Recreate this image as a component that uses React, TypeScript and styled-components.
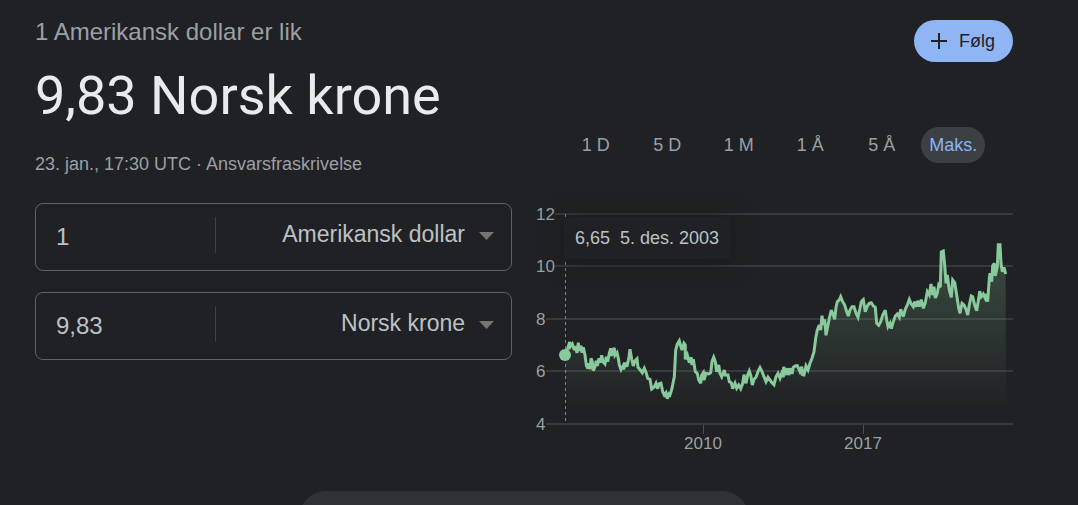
import React, { useState } from "react";
import styled, { createGlobalStyle } from "styled-components";

const GlobalStyle = createGlobalStyle`
  * { box-sizing: border-box; }
  body {
    margin: 0;
    background: #202124;
    color: #bdc1c6;
    font-family: "Liberation Sans", Arial, sans-serif;
    font-size: 18px;
  }
  button, input, select { font: inherit; color: inherit; }
`;

const Page = styled.main`
  height: 100vh;
  overflow: hidden;
  display: flex;
  flex-direction: column;
`;

const Columns = styled.div`
  width: 100%;
  display: grid;
  grid-template-columns: 1fr 1fr;
  gap: 24px;
  padding: 18px 65px 0 35px;
  flex-shrink: 0;
`;

const Converter = styled.section`
  min-width: 0;
`;

const BaseLine = styled.p`
  margin: 0 0 18px;
  font-size: 24px;
  line-height: 28px;
  color: #9aa0a6;
`;

const Result = styled.h1`
  margin: 0 0 26px;
  font-family: Roboto, sans-serif;
  font-weight: 400;
  font-size: 54px;
  line-height: 64px;
  white-space: nowrap;
  color: #e8eaed;
`;

const Stamp = styled.p`
  margin: 0 0 28px;
  line-height: 21px;
  color: #9aa0a6;
  a { color: inherit; text-decoration: none; }
`;

const Field = styled.div`
  position: relative;
  display: flex;
  align-items: center;
  height: 68px;
  border: 1px solid #5f6368;
  border-radius: 8px;
  & + & { margin-top: 21px; }
`;

const Amount = styled.input`
  width: 180px;
  height: 36px;
  margin-bottom: 4px;
  padding: 4px 0 0 20px;
  border: 0;
  border-right: 1px solid #3c4043;
  background: transparent;
  font-size: 24px;
  outline: none;
`;

const Currency = styled.select`
  flex: 1;
  min-width: 0;
  height: 64px;
  padding: 0 46px 6px 0;
  border: 0;
  background: transparent;
  appearance: none;
  font-size: 23px;
  text-align: right;
  text-align-last: right;
  outline: none;
`;

const Caret = styled.svg`
  position: absolute;
  right: 17px;
  top: 28px;
  pointer-events: none;
`;

const History = styled.section`
  display: flex;
  flex-direction: column;
  min-width: 0;
  padding-top: 2px;
`;

const Follow = styled.button`
  align-self: flex-end;
  display: flex;
  align-items: center;
  gap: 12px;
  height: 42px;
  padding: 0 18px 0 17px;
  border: 0;
  border-radius: 21px;
  background: #8fb5f5;
  color: #202124;
`;

const Ranges = styled.div`
  display: grid;
  grid-template-columns: repeat(6, 1fr);
  justify-items: center;
  margin: 65px 24px 0;
`;

const Range = styled.button<{ $active: boolean }>`
  height: 36px;
  padding: 0 8px;
  border: 0;
  border-radius: 18px;
  white-space: nowrap;
  background: ${(p) => (p.$active ? "#3c4043" : "transparent")};
  color: ${(p) => (p.$active ? "#8ab4f8" : "#9aa0a6")};
`;

const ChartBox = styled.div`
  position: relative;
  margin-top: 37px;
`;

const Chart = styled.svg`
  display: block;
  width: 100%;
  height: auto;
  overflow: visible;
  text { font-size: 17px; fill: #9aa0a6; }
`;

const Tip = styled.div`
  position: absolute;
  left: 28px;
  top: 17px;
  display: flex;
  gap: 10px;
  padding: 10px 12px 10px 11px;
  line-height: 22px;
  white-space: nowrap;
  border-radius: 2px;
  background: #202124;
  box-shadow: 0 2px 24px rgba(24, 24, 24, 0.8);
`;

const More = styled.button`
  flex-shrink: 0;
  align-self: center;
  width: 450px;
  max-width: 90%;
  height: 54px;
  margin: 31px 30px 0 0;
  border: 0;
  border-radius: 27px;
  background: #303134;
`;

// Rate samples, in chart coordinates.
const early = "30,72 38,55 44,36 46,50 52,42 58,60 60,48 66,68 70,38 73,62 78,47 81,68 85,52 90,75 94,105 98,115 102,100 105,118 108,85 112,95 115,122 120,110 124,92 127,108 132,85 136,98 140,76 144,95 150,102 154,80 158,95 163,70 167,55 170,78 174,62 178,54 180,76 186,68 190,85 193,105 198,119 204,108 206,118 211,98 216,110 222,80 225,58 230,88 235,108 240,92 246,86 249,112 256,120 262,128 268,115 274,130 278,145 285,148 290,177 297,172 303,160 308,176 312,162 318,160 323,185 328,195 333,188 337,206 342,192";
const middle = "0,225 6,205 13,170 17,90 22,72 28,62 32,78 36,90 42,70 46,75 46,118 52,105 58,128 64,112 66,135 70,118 76,155 82,160 86,180 92,190 95,165 100,158 102,180 108,160 116,162 122,158 126,125 131,112 136,125 140,155 146,135 150,160 155,170 163,150 166,165 174,165 178,185 184,188 188,206 195,190 200,205 206,195 212,206 218,190 222,164 228,190 233,165 238,153 242,165 247,195 252,178 258,172 264,155 270,143 276,155 282,170 288,185 294,172 300,180 306,188 312,194 318,170 324,160 330,175 335,160 340,172 341,140 346,165 352,145 356,165 362,145 366,162 370,142 375,138 382,137";
const late = "0,425 5,410 8,434 12,435 18,408 24,420 30,400 36,385 42,365 47,325 52,300 58,285 62,300 66,257 70,285 74,268 78,316 83,290 88,265 94,240 100,255 104,268 108,232 112,215 118,210 122,200 128,215 134,225 140,245 145,258 150,240 156,230 162,230 168,250 174,262 180,235 184,215 190,209 196,245 202,228 208,220 214,218 220,228 226,232 230,280 236,286 242,275 248,255 256,241 260,270 264,290 270,280 274,296 280,275 286,258 292,252 298,262 302,238 310,260 316,238 322,225 328,208 334,222 340,230 344,215 348,230 354,212 358,230 364,209 370,235 376,218 382,185 388,195 393,162 398,195 402,170 406,204 412,190 416,165 421,172 424,66 430,63 434,105 438,160 442,135 448,180 454,202 458,150 464,158 470,195 476,235 480,250 486,220 492,225 498,238 503,255 508,225 514,198 518,200 524,225 530,242 536,205 539,184 544,200 550,192 556,205 560,192 563,215 568,145 570,130 575,155 578,107 583,100 586,138 592,110 595,44 600,44 603,100 607,125 612,112 617,132";

const place = (run: string, left: number, top: number) =>
  run.split(" ").map((pair) => {
    const [x, y] = pair.split(",").map(Number);
    return `${(left + x / 3).toFixed(1)},${(top + y / 3).toFixed(1)}`;
  });

const rates = [
  ...place(early, 19, 130),
  ...place(middle, 134, 120),
  ...place(late, 264, 30),
].join(" ");

const levels = [
  { label: "12", y: 14, from: 19 },
  { label: "10", y: 66, from: 19 },
  { label: "8", y: 119, from: 10 },
  { label: "6", y: 171, from: 10 },
  { label: "4", y: 224, from: 10 },
];
const years = [
  { label: "2010", x: 167 },
  { label: "2017", x: 327 },
];
const ranges = ["1 D", "5 D", "1 M", "1 Å", "5 Å", "Maks."];
const currencies = ["Amerikansk dollar", "Norsk krone"];

function CurrencyField({ amount, currency, label }: { amount: string; currency: string; label: string }) {
  return (
    <Field>
      <Amount aria-label={`Beløp ${label}`} defaultValue={amount} />
      <Currency aria-label={`Valuta ${label}`} defaultValue={currency}>
        {currencies.map((c) => (
          <option key={c}>{c}</option>
        ))}
      </Currency>
      <Caret width="15" height="8" viewBox="0 0 15 8" aria-hidden="true">
        <path d="M0 0h15L7.500 8z" fill="#757575" />
      </Caret>
    </Field>
  );
}

export default function App() {
  const [range, setRange] = useState("Maks.");
  return (
    <>
      <GlobalStyle />
      <Page>
        <Columns>
          <Converter>
            <BaseLine>1 Amerikansk dollar er lik</BaseLine>
            <Result>9,83 Norsk krone</Result>
            <Stamp>
              23. jan., 17:30 UTC · <a href="#ansvar">Ansvarsfraskrivelse</a>
            </Stamp>
            <CurrencyField amount="1" currency="Amerikansk dollar" label="fra" />
            <CurrencyField amount="9,83" currency="Norsk krone" label="til" />
          </Converter>
          <History>
            <Follow>
              <svg width="16" height="16" viewBox="0 0 16 16" aria-hidden="true">
                <path d="M8 0v16M0 8h16" stroke="#202124" strokeWidth="2" />
              </svg>
              Følg
            </Follow>
            <Ranges>
              {ranges.map((r) => (
                <Range key={r} $active={r === range} onClick={() => setRange(r)}>
                  {r}
                </Range>
              ))}
            </Ranges>
            <ChartBox>
              <Chart viewBox="0 0 477 260" role="img" aria-label="Kurshistorikk">
                <defs>
                  <linearGradient id="fade" gradientUnits="userSpaceOnUse" x1="0" y1="44" x2="0" y2="208">
                    <stop offset="0" stopColor="#81c995" stopOpacity="0.26" />
                    <stop offset="1" stopColor="#81c995" stopOpacity="0" />
                  </linearGradient>
                </defs>
                {levels.map((l) => (
                  <g key={l.label}>
                    <path d={`M${l.from} ${l.y}H477`} stroke="#37393c" strokeWidth="2" />
                    <text x="0" y={l.y + 6}>{l.label}</text>
                  </g>
                ))}
                {years.map((t) => (
                  <g key={t.label}>
                    <path d={`M${t.x + 0.5} 225v9`} stroke="#4a4d51" />
                    <text x={t.x} y="249" textAnchor="middle">{t.label}</text>
                  </g>
                ))}
                <polygon points={`29,208 ${rates} 470,208`} fill="url(#fade)" />
                <path d="M29.500 14V223" stroke="#80868b" strokeDasharray="3 3" />
                <polyline
                  points={rates}
                  fill="none"
                  stroke="#8ac99b"
                  strokeWidth="3"
                  strokeLinejoin="miter"
                  strokeMiterlimit="3"
                />
                <circle cx="29" cy="155" r="6" fill="#8ac99b" />
              </Chart>
              <Tip>
                <span>6,65</span>
                <span>5. des. 2003</span>
              </Tip>
            </ChartBox>
          </History>
        </Columns>
        <More aria-label="Mer" />
      </Page>
    </>
  );
}
